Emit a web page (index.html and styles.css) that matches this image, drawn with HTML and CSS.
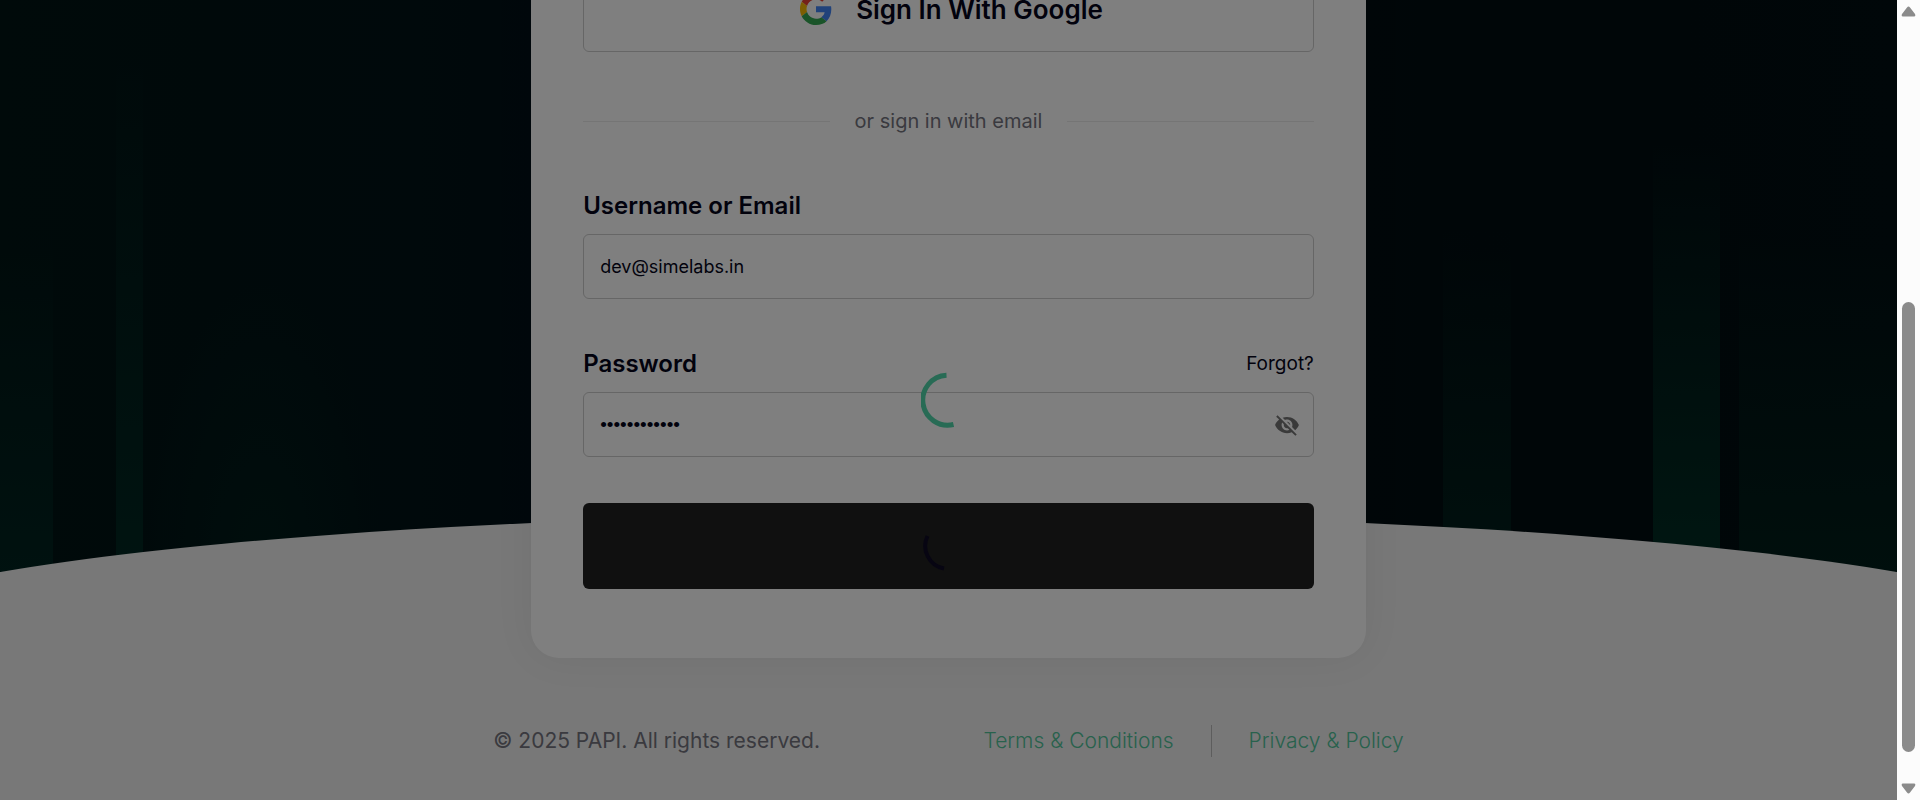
FILE: index.html
```html
<!DOCTYPE html>
<html lang="en">
<head>
<meta charset="utf-8">
<meta name="viewport" content="width=device-width, initial-scale=1">
<title>PAPI - Sign In</title>
<link rel="stylesheet" href="styles.css">
</head>
<body>
<div class="window">
  <div class="page">
    <div class="backdrop" aria-hidden="true">
      <div class="beam beam-a"></div>
      <div class="beam beam-b"></div>
      <div class="beam beam-c"></div>
      <div class="beam beam-d"></div>
      <div class="beam beam-e"></div>
      <div class="beam beam-f"></div>
      <div class="curve"></div>
    </div>
    <main class="card">
      <button type="button" class="google">
        <svg class="google-logo" viewBox="0 0 48 48" aria-hidden="true">
          <path fill="#EA4335" d="M24 9.5c3.54 0 6.71 1.22 9.21 3.6l6.85-6.85C35.9 2.38 30.47 0 24 0 14.62 0 6.51 5.38 2.56 13.22l7.98 6.19C12.43 13.72 17.74 9.5 24 9.5z"/>
          <path fill="#4285F4" d="M46.98 24.55c0-1.57-.15-3.09-.38-4.55H24v9.02h12.94c-.58 2.96-2.26 5.48-4.78 7.18l7.73 6c4.51-4.18 7.09-10.36 7.09-17.65z"/>
          <path fill="#FBBC05" d="M10.53 28.59c-.48-1.45-.76-2.99-.76-4.59s.27-3.14.76-4.59l-7.98-6.19C.92 16.46 0 20.12 0 24c0 3.88.92 7.54 2.56 10.78l7.97-6.19z"/>
          <path fill="#34A853" d="M24 48c6.48 0 11.93-2.13 15.89-5.81l-7.73-6c-2.15 1.45-4.92 2.3-8.16 2.3-6.26 0-11.57-4.22-13.47-9.91l-7.98 6.19C6.51 42.62 14.62 48 24 48z"/>
        </svg>
        <span>Sign In With Google</span>
      </button>
      <div class="divider"><span>or sign in with email</span></div>
      <form class="form">
        <div class="field">
          <div class="field-head"><label for="email">Username or Email</label></div>
          <div class="control"><input id="email" type="text" value="dev@simelabs.in"></div>
        </div>
        <div class="field">
          <div class="field-head">
            <label for="password">Password</label>
            <a class="forgot" href="#">Forgot?</a>
          </div>
          <div class="control">
            <input id="password" class="secret" type="password" value="abcdefghijkl">
            <button type="button" class="reveal" aria-label="Show password">
              <svg viewBox="0 0 24 24" aria-hidden="true"><path d="M12 7c2.760 0 5 2.240 5 5 0 .65-.13 1.260-.36 1.830l2.920 2.920c1.510-1.260 2.700-2.890 3.430-4.750-1.730-4.390-6-7.500-11-7.500-1.400 0-2.740.25-3.980.7l2.160 2.160C10.740 7.130 11.350 7 12 7zM2 4.270l2.280 2.280.46.46C3.080 8.300 1.780 10.020 1 12c1.730 4.390 6 7.500 11 7.500 1.550 0 3.030-.3 4.380-.84l.42.42L19.730 22 21 20.730 3.270 3 2 4.270zM7.530 9.800l1.550 1.550c-.05.21-.08.43-.08.65 0 1.660 1.340 3 3 3 .22 0 .44-.03.65-.08l1.550 1.550c-.67.33-1.410.53-2.200.53-2.760 0-5-2.240-5-5 0-.79.2-1.530.53-2.200zm4.310-.78l3.150 3.150.02-.16c0-1.660-1.340-3-3-3l-.17.01z"/></svg>
            </button>
          </div>
        </div>
        <button type="submit" class="submit" aria-label="Sign in">
          <svg class="submit-spinner" viewBox="0 0 52 52" aria-hidden="true"><path d="M5.500 16A23 23 0 0 0 22 48.500"/></svg>
        </button>
      </form>
    </main>
    <footer class="footer">
      <span class="copyright">© 2025 PAPI. All rights reserved.</span>
      <nav class="links">
        <a href="#">Terms &amp; Conditions</a>
        <a href="#">Privacy &amp; Policy</a>
      </nav>
    </footer>
    <div class="overlay">
      <svg class="spinner" viewBox="0 0 56 56" role="img" aria-label="Loading"><path d="M25.500 3.200A25 25 0 1 0 32.500 52.500"/></svg>
    </div>
  </div>
  <div class="scrollbar" aria-hidden="true">
    <svg class="arrow" viewBox="0 0 15 11"><path d="M6 1.500Q7.500-.5 9 1.500L14 8Q15 10.500 13 10.500H2Q0 10.500 1 8Z"/></svg>
    <div class="track"><div class="thumb"></div></div>
    <svg class="arrow" viewBox="0 0 15 11"><path d="M6 9.500Q7.500 11.500 9 9.500L14 3Q15 .5 13 .5H2Q0 .5 1 3Z"/></svg>
  </div>
</div>
</body>
</html>
```
FILE: styles.css
```css
* {
  box-sizing: border-box;
}

body {
  margin: 0;
  font-family: Inter, "Liberation Sans", sans-serif;
  color: #05051a;
}

button,
input {
  font: inherit;
  color: inherit;
}

a {
  text-decoration: none;
}

.window {
  display: flex;
  height: 100vh;
  overflow: hidden;
}

/* Page content, scrolled to its end */
.page {
  position: relative;
  flex: 1;
  min-width: 0;
  overflow: hidden;
  display: flex;
  flex-direction: column;
  justify-content: flex-end;
  align-items: center;
}

.backdrop {
  position: absolute;
  inset: 0;
  overflow: hidden;
  background: linear-gradient(90deg, #001414 0%, #001216 22%, #000e18 34%, #000e14 66%, #000c10 78%, #000e12 100%);
}

.beam {
  position: absolute;
  top: 0;
  bottom: 28%;
}

.beam-a {
  left: 0;
  width: 53px;
  background: linear-gradient(transparent 40%, #002420);
}

.beam-b {
  left: 116px;
  width: 27px;
  background: linear-gradient(transparent 10%, #002822);
}

.beam-c {
  top: 35%;
  left: 143px;
  width: 240px;
  background: radial-gradient(ellipse at 50% 100%, #001c1a, transparent 70%);
}

.beam-d {
  right: 386px;
  width: 68px;
  background: linear-gradient(transparent 40%, #00201c);
}

.beam-e {
  right: 177px;
  width: 67px;
  background: linear-gradient(transparent 25%, #002e24);
}

.beam-f {
  right: 0;
  width: 158px;
  background: linear-gradient(transparent 40%, #001e1a);
}

.curve {
  position: absolute;
  left: -10%;
  right: -10%;
  bottom: 0;
  height: 286px;
  border-radius: 50% 50% 0 0 / 130px 130px 0 0;
  background: #f0f0f0;
}

.card {
  position: relative;
  width: 44%;
  min-width: 600px;
  padding: 68px 52px 69px;
  border-radius: 28px;
  background: #fff;
  box-shadow: 0 0 40px rgba(0, 0, 0, 0.06);
}

.google {
  display: flex;
  align-items: center;
  justify-content: center;
  gap: 24px;
  width: 100%;
  height: 86px;
  padding: 0 0 0 6px;
  border: 1px solid #ccc;
  border-radius: 6px;
  background: none;
  font-size: 26px;
  font-weight: 600;
}

.google-logo {
  width: 32px;
  height: 32px;
}

.divider {
  display: flex;
  align-items: center;
  gap: 25px;
  margin: 54px 0 51px;
  font-size: 20px;
  line-height: 30px;
  color: #74747e;
}

.divider::before,
.divider::after {
  content: "";
  flex: 1;
  height: 1px;
  background: #eaeaea;
}

.form {
  display: flex;
  flex-direction: column;
}

.field {
  margin-bottom: 46px;
}

.field-head {
  display: flex;
  align-items: center;
  justify-content: space-between;
  height: 36px;
  margin-bottom: 11px;
  font-size: 24px;
  font-weight: 600;
}

.forgot {
  color: #05051a;
  font-size: 19px;
  font-weight: 400;
}

.control {
  display: flex;
  align-items: center;
  height: 65px;
  padding: 0 13px 0 16px;
  border: 1px solid #ccc;
  border-radius: 6px;
}

.control input {
  flex: 1;
  min-width: 0;
  padding: 0;
  border: 0;
  outline: 0;
  background: none;
  font-size: 18px;
}

.control .secret {
  font-family: "Liberation Sans", sans-serif;
  font-size: 19px;
}

.reveal {
  display: flex;
  padding: 0;
  border: 0;
  background: none;
}

.reveal svg {
  width: 26px;
  height: 26px;
  fill: #757575;
}

.submit {
  display: flex;
  align-items: center;
  justify-content: center;
  height: 86px;
  padding: 0;
  border: 0;
  border-radius: 6px;
  background: #202020;
}

.submit-spinner {
  width: 52px;
  height: 52px;
  fill: none;
  stroke: #0e0a24;
  stroke-width: 4;
}

.footer {
  position: relative;
  display: flex;
  align-items: center;
  justify-content: space-between;
  width: 48%;
  min-width: 700px;
  padding: 67px 0 43px;
  font-size: 21px;
  line-height: 32px;
  color: #74747e;
}

.links {
  display: flex;
}

.links a {
  color: #50c49a;
  font-weight: 300;
}

.links a + a {
  margin-left: 37px;
  padding-left: 37px;
  border-left: 1px solid #bbb;
}

.overlay {
  position: absolute;
  inset: 0;
  display: flex;
  align-items: center;
  justify-content: center;
  background: rgba(0, 0, 0, 0.5);
}

.spinner {
  width: 56px;
  height: 56px;
  fill: none;
  stroke: #286b55;
  stroke-width: 5;
}

.scrollbar {
  display: flex;
  flex-direction: column;
  align-items: center;
  width: 23px;
  padding: 6px 0;
  background: #fcfcfc;
}

.arrow {
  width: 15px;
  height: 11px;
  fill: #8b8b8b;
}

.track {
  display: flex;
  flex: 1;
  flex-direction: column;
  justify-content: flex-end;
  padding: 9px 0 31px;
}

.thumb {
  width: 13px;
  height: 62%;
  border-radius: 7px;
  background: #8b8b8b;
}
```
